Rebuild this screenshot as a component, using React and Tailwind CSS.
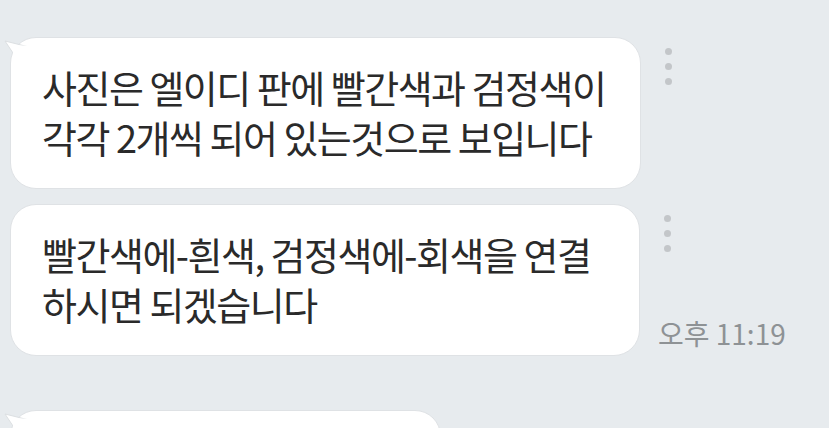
import React from 'react';

const font = { fontFamily: '"Noto Sans CJK KR", "Noto Sans", sans-serif' };

const Tail = () => (
  <svg className="absolute left-[-8px] top-[1px]" width="30" height="22" viewBox="0 0 30 22">
    <path d="M2 2 L26 8 L14 20 Z" fill="#ffffff" stroke="#dcdfe2" strokeWidth="1" />
    <path d="M10 6.5 L28 6.5 L28 22 L10 22 Z" fill="#ffffff" />
  </svg>
);

const Dots = () => (
  <div className="flex flex-col gap-[8px] pt-[11px] pl-[1px]">
    <span className="w-[7px] h-[7px] rounded-full bg-[#c3c6c9]"></span>
    <span className="w-[7px] h-[7px] rounded-full bg-[#c3c6c9]"></span>
    <span className="w-[7px] h-[7px] rounded-full bg-[#c3c6c9]"></span>
  </div>
);

const Bubble = ({ lines, tail, width }) => (
  <div className={`relative bg-white rounded-[26px] border border-[#dfe2e5] ${width} pl-[31px] pt-[24px] pb-[26px]`}>
    {tail && <Tail />}
    {lines.map((l, i) => (
      <p key={i} className="text-[38px] leading-[50px] text-[#2a2a2a] whitespace-nowrap tracking-[-1.5px]">{l}</p>
    ))}
  </div>
);

const App = () => {
  return (
    <div className="w-[829px] h-[428px] overflow-hidden bg-[#e7ebee] pl-[10px] pt-[37px]" style={font}>
      <div className="flex gap-[23px]">
        <Bubble tail width="w-[631px]" lines={['사진은 엘이디 판에 빨간색과 검정색이', '각각 2개씩 되어 있는것으로 보입니다']} />
        <Dots />
      </div>
      <div className="flex gap-[23px] mt-[15px]">
        <Bubble width="w-[630px]" lines={['빨간색에-흰색, 검정색에-회색을 연결', '하시면 되겠습니다']} />
        <div className="flex flex-col justify-between">
          <Dots />
          <p className="text-[28px] leading-[30px] text-[#8e9295] pb-[8px] ml-[-5px]">오후 11:19</p>
        </div>
      </div>
      <div className="mt-[54px]">
        <div className="relative bg-white rounded-[26px] border border-[#dfe2e5] w-[431px] h-[80px]">
          <Tail />
        </div>
      </div>
    </div>
  );
};

export default App;
